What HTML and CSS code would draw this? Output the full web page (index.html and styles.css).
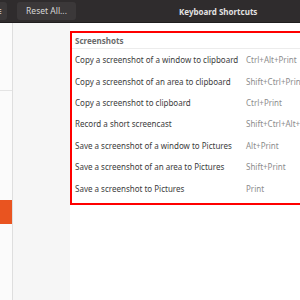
FILE: index.html
```html
<!DOCTYPE html>
<html lang="en">

<head>
    <meta charset="UTF-8" />
    <meta name="viewport" content="width=device-width, initial-scale=1.0" />
    <title>Keyboard Shortcuts</title>
    <link rel="stylesheet" href="styles.css">
</head>

<body>
    <div class="window">
        <div class="headerbar">
            <div class="menu-button">&#8801;</div>
            <div class="reset-button">Reset All...</div>
            <div class="header-title">Keyboard Shortcuts</div>
        </div>

        <div class="window-body">
            <div class="side-nav">
                <div class="side-nav-item">(0)</div>
                <div class="side-nav-gap"></div>
                <div class="side-nav-active"></div>
            </div>
            <div class="side-panel"></div>

            <div class="main-content">
                <div class="highlight-box">
                    <div class="section-title">Screenshots</div>
                    <div class="shortcut-list">
                        <div class="shortcut-row">
                            <span class="shortcut-name">Copy a screenshot of a window to clipboard</span>
                            <span class="shortcut-keys">Ctrl+Alt+Print</span>
                        </div>
                        <div class="shortcut-row">
                            <span class="shortcut-name">Copy a screenshot of an area to clipboard</span>
                            <span class="shortcut-keys">Shift+Ctrl+Print</span>
                        </div>
                        <div class="shortcut-row">
                            <span class="shortcut-name">Copy a screenshot to clipboard</span>
                            <span class="shortcut-keys">Ctrl+Print</span>
                        </div>
                        <div class="shortcut-row">
                            <span class="shortcut-name">Record a short screencast</span>
                            <span class="shortcut-keys">Shift+Ctrl+Alt+R</span>
                        </div>
                        <div class="shortcut-row">
                            <span class="shortcut-name">Save a screenshot of a window to Pictures</span>
                            <span class="shortcut-keys">Alt+Print</span>
                        </div>
                        <div class="shortcut-row">
                            <span class="shortcut-name">Save a screenshot of an area to Pictures</span>
                            <span class="shortcut-keys">Shift+Print</span>
                        </div>
                        <div class="shortcut-row">
                            <span class="shortcut-name">Save a screenshot to Pictures</span>
                            <span class="shortcut-keys">Print</span>
                        </div>
                    </div>
                </div>
            </div>
        </div>
    </div>
</body>

</html>
```

FILE: styles.css
```css
* {
    box-sizing: border-box;
}

body {
    margin: 0;
    font-family: "Noto Sans", "Open Sans", sans-serif;
    background-color: #fff;
}

.window {
    width: 300px;
    height: 300px;
    overflow: hidden;
    display: flex;
    flex-direction: column;
}

.headerbar {
    height: 23px;
    flex-shrink: 0;
    display: flex;
    align-items: center;
    background-color: #2f2c2d;
    border-bottom: 1px solid #1f1d1e;
}

.menu-button {
    width: 17px;
    height: 18px;
    margin-left: -10px;
    background-color: #3b3839;
    border-radius: 3px;
    color: #d8d8d8;
    font-size: 11px;
    line-height: 18px;
    text-align: center;
}

.reset-button {
    width: 59px;
    height: 18px;
    margin-left: 10px;
    background-color: #3b3839;
    border-radius: 3px;
    color: #d6d6d6;
    font-size: 8.5px;
    line-height: 18px;
    text-align: center;
}

.header-title {
    margin-left: 103px;
    color: #e2e2e2;
    font-size: 8px;
    font-weight: bold;
    white-space: nowrap;
}

.window-body {
    flex: 1;
    display: flex;
}

.side-nav {
    width: 13px;
    flex-shrink: 0;
    background-color: #fbfbfb;
    border-right: 1px solid #dedede;
    overflow: hidden;
    display: flex;
    flex-direction: column;
}

.side-nav-item {
    height: 68px;
    padding-top: 6px;
    margin-left: -13px;
    border-bottom: 1px solid #e4e4e4;
    color: #8a8a8a;
    font-size: 9px;
    white-space: nowrap;
}

.side-nav-gap {
    height: 109px;
}

.side-nav-active {
    height: 24px;
    background-color: #e95420;
}

.side-panel {
    width: 57px;
    flex-shrink: 0;
    background-color: #f6f6f6;
}

.main-content {
    flex: 1;
    padding-top: 8px;
    overflow: hidden;
}

.highlight-box {
    width: 260px;
    height: 174px;
    border: 2px solid #ff0000;
    padding: 0 0 0 3px;
}

.section-title {
    height: 16px;
    line-height: 16px;
    color: #6a6a6a;
    font-size: 8px;
    font-weight: bold;
    border-bottom: 1px solid #ececec;
    margin-left: -3px;
    padding-left: 3px;
}

.shortcut-row {
    height: 21.4px;
    display: flex;
    align-items: center;
    font-size: 8px;
    white-space: nowrap;
}

.shortcut-name {
    width: 171px;
    color: #3c3c3c;
}

.shortcut-keys {
    color: #8c8c8c;
}
```
